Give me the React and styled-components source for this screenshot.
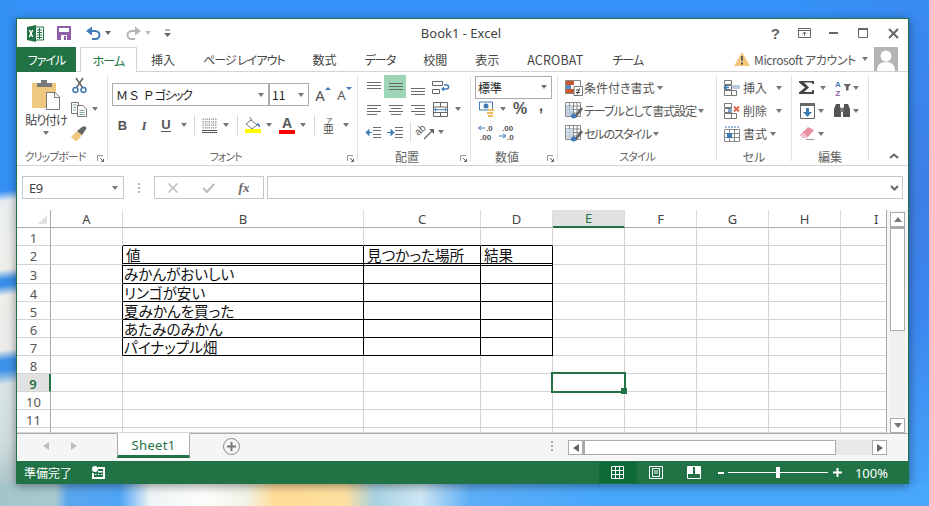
import React from "react";
import styled, { createGlobalStyle } from "styled-components";

const JP = `"Noto Sans CJK JP", "Noto Sans", sans-serif`;
const LAT = `"Noto Sans", "Noto Sans CJK JP", sans-serif`;
const GREEN = "#217346";

const Global = createGlobalStyle`
  html, body { margin: 0; padding: 0; overflow: hidden; background: #3592f8; }
  * { box-sizing: border-box; }
  svg { display: block; flex: none; overflow: visible; }
`;

const Desktop = styled.div`
  width: 929px;
  height: 506px;
  padding: 18px 0 0 16px;
  background:
    linear-gradient(90deg, #a4c6cb 0, #a9cbd0 55px, #5aa6ee 68px, #4fa5f6 120px, #eef4f6 150px, #fdfdfb 205px, #f1f3e8 245px, #ffdc96 275px, #ffe0a0 345px, #a8d2e2 375px, #cfe7f4 420px, #5eaef7 470px, #48a8fc 600px) 0 484px / 100% 22px no-repeat,
    linear-gradient(173deg, #3590f6 0, #3590f6 190px, #e8eef0 200px, #eeeeea 268px, #3b8fe8 278px, #3b8fe8 284px, #ededea 294px, #ebecea 348px, #3f92ea 358px, #3f92ea 368px, #d8e4e4 382px, #cfdcdc 440px, #9dbcc2 500px) 0 0 / 16px 506px no-repeat,
    linear-gradient(135deg, #3592f8 0, #3592f8 55%, #3d7fe6 78%, #3c86ee 86%, #47a7fb 100%);
`;

const Win = styled.div`
  width: 893px;
  height: 466px;
  display: flex;
  flex-direction: column;
  background: #fff;
  border: 1px solid ${GREEN};
  border-bottom: 0;
  box-shadow: 0 2px 9px rgba(0, 0, 0, 0.42);
  font-family: ${JP};
  font-feature-settings: "palt";
  color: #444;
`;

const Slot = styled.div`
  width: ${(p) => p.$w}px;
  margin-left: ${(p) => p.$ml || 0}px;
  height: 100%;
  flex: none;
  display: flex;
  align-items: center;
  justify-content: center;
`;

const TriangleDown = styled.span`
  display: block;
  width: 0;
  height: 0;
  border-left: 3.5px solid transparent;
  border-right: 3.5px solid transparent;
  border-top: 4px solid ${(p) => p.$c || "#777"};
`;
const Caret = ({ w = 10, ml, c }) => (
  <Slot $w={w} $ml={ml}>
    <TriangleDown $c={c} />
  </Slot>
);

/* ---------- title bar ---------- */
const TitleBar = styled.div`
  height: 28px;
  flex: none;
  display: grid;
  grid-template-columns: 1fr auto 1fr;
  align-items: center;
`;
const Quick = styled.div`
  height: 100%;
  display: flex;
  padding: 0 0 0 10px;
`;
const Title = styled.div`
  font: 13px ${LAT};
  color: #444;
  margin-left: -3px;
`;
const WinControls = styled.div`
  height: 100%;
  display: flex;
  justify-content: flex-end;
`;

/* ---------- tabs ---------- */
const TabRow = styled.div`
  height: 25px;
  flex: none;
  display: flex;
  align-items: stretch;
  border-bottom: 1px solid #d4d4d4;
`;
const FileTab = styled.div`
  width: 59px;
  margin-right: 4px;
  height: 25px;
  background: ${GREEN};
  color: #fff;
  font-size: 12px;
  letter-spacing: -1px;
  display: flex;
  align-items: center;
  justify-content: center;
`;
const HomeTab = styled.div`
  width: 57px;
  height: 25px;
  background: #fff;
  color: ${GREEN};
  border: 1px solid #d4d4d4;
  border-bottom: 0;
  font-size: 12px;
  letter-spacing: -1px;
  display: flex;
  align-items: center;
  justify-content: center;
`;
const Tab = styled.div`
  padding: 0 14px;
  margin-left: ${(p) => p.$ml || 0}px;
  font-size: ${(p) => (p.$latin ? 12.5 : 12)}px;
  color: #444;
  display: flex;
  align-items: center;
  white-space: pre;
  letter-spacing: ${(p) => (p.$tight ? "-1px" : p.$latin ? "0.15px" : "0")};
`;
const Account = styled.div`
  margin-left: auto;
  display: flex;
  align-items: center;
  padding-right: 10px;
  height: 24px;
`;
const AccountName = styled.span`
  font-size: 12px;
  color: #555;
  margin-left: 4px;
  letter-spacing: -0.4px;
  white-space: nowrap;
`;
const Avatar = styled.div`
  width: 24px;
  height: 24px;
  background: #b4b4b4;
  overflow: hidden;
`;

/* ---------- ribbon ---------- */
const Ribbon = styled.div`
  height: 94px;
  flex: none;
  display: flex;
  padding-top: 4px;
  border-bottom: 1px solid #d4d4d4;
`;
const Group = styled.div`
  width: ${(p) => p.$w}px;
  height: 85px;
  flex: none;
  display: flex;
  flex-direction: column;
  border-right: 1px solid #e1e1e1;
`;
const GroupBody = styled.div`
  height: 70px;
  flex: none;
  padding-left: ${(p) => p.$pl || 0}px;
  padding-top: ${(p) => p.$pt || 0}px;
  display: flex;
  flex-direction: ${(p) => (p.$row ? "row" : "column")};
`;
const Foot = styled.div`
  height: 15px;
  padding-top: 3px;
  display: grid;
  grid-template-columns: ${(p) => (p.$launch ? "1fr 14px" : "1fr")};
`;
const FootLabel = styled.div`
  text-align: center;
  font-size: ${(p) => (p.$kana ? 11 : 12)}px;
  letter-spacing: ${(p) => (p.$kana ? "-1px" : "0")};
  line-height: 15px;
  color: #666;
  white-space: nowrap;
`;
const FootLaunch = styled.div`
  display: flex;
  align-items: center;
  justify-content: center;
  height: 15px;
  padding-top: 3px;
`;
const Row = styled.div`
  height: ${(p) => p.$h}px;
  margin-top: ${(p) => p.$mt || 0}px;
  flex: none;
  display: flex;
  align-items: center;
`;
const Sep = styled.span`
  display: block;
  width: 1px;
  height: ${(p) => p.$h || 20}px;
  background: #d9d9d9;
`;
const PasteCol = styled.div`
  width: 48px;
  margin-left: 5px;
  padding-top: 4px;
  display: flex;
  flex-direction: column;
  align-items: center;
`;
const PasteLabel = styled.div`
  font-size: 12px;
  line-height: 16px;
  letter-spacing: -1px;
  margin: 2px -4px 3px;
  white-space: nowrap;
`;
const ToolCol = styled.div`
  display: flex;
  flex-direction: column;
`;
const FontBox = styled.div`
  width: ${(p) => p.$w}px;
  height: 23px;
  border: 1px solid #ababab;
  margin-right: ${(p) => p.$mr || 0}px;
  background: #fff;
  display: flex;
  align-items: center;
  justify-content: space-between;
  padding: 0 ${(p) => p.$pr ?? 4}px 0 ${(p) => p.$pl ?? 3}px;
  font-size: 12px;
  color: #222;
  font-feature-settings: normal;
  white-space: pre;
`;
const Kana = styled.span`
  font-feature-settings: "palt";
  letter-spacing: -1.5px;
`;
const GrowA = styled.span`
  position: relative;
  display: block;
  font: ${(p) => p.$s}px ${LAT};
  line-height: 16px;
  color: #555;
  &::after {
    content: "";
    position: absolute;
    right: -6px;
    top: 0;
    border-left: 3px solid transparent;
    border-right: 3px solid transparent;
    ${(p) => (p.$up ? "border-bottom: 3px solid #3f7ab6;" : "border-top: 3px solid #3f7ab6;")}
  }
`;
const Styled1 = styled.span`
  font: ${(p) => (p.$i ? "italic" : "normal")} bold 13px "Liberation Serif", serif;
  font-family: ${(p) => (p.$i ? `"Liberation Serif", serif` : `"Liberation Sans", sans-serif`)};
  color: #555;
  border-bottom: ${(p) => (p.$u ? "1.5px solid #555" : "0")};
  line-height: 13px;
`;
const ColorA = styled.div`
  display: flex;
  flex-direction: column;
  align-items: center;
  font: bold 14px "Liberation Sans", sans-serif;
  line-height: 14px;
  color: #555;
  &::after {
    content: "";
    width: 16px;
    height: 4px;
    background: #ff0000;
    margin-top: 0;
  }
`;
const NumSym = styled.span`
  font: ${(p) => p.$s}px "Liberation Sans", sans-serif;
  font-weight: 600;
  color: #555;
  margin-top: ${(p) => p.$mt || 0}px;
`;
const HiSlot = styled.div`
  width: 22px;
  height: 23px;
  margin-top: -1px;
  background: #9fd5b7;
  flex: none;
  display: flex;
  align-items: center;
  justify-content: center;
`;
const Item = styled.div`
  display: flex;
  align-items: center;
  gap: ${(p) => p.$gap ?? 1}px;
  font-size: 12px;
  color: #555;
  white-space: nowrap;
`;
const ItemText = styled.span`
  letter-spacing: ${(p) => p.$ls || 0}px;
`;
const CollapseArea = styled.div`
  flex: 1;
  height: 85px;
  display: flex;
  align-items: flex-end;
  justify-content: flex-end;
  padding: 0 9px 2px 0;
`;

/* ---------- formula bar ---------- */
const FormulaRow = styled.div`
  height: 44px;
  flex: none;
  display: flex;
  padding: 10px 5px 11px 5px;
`;
const NameBox = styled.div`
  width: 102px;
  border: 1px solid #c6c6c6;
  display: flex;
  align-items: center;
  justify-content: space-between;
  padding: 0 5px 0 6px;
  font: 13px ${LAT};
  letter-spacing: -0.5px;
  color: #444;
`;
const FxDots = styled.div`
  width: 30px;
  display: flex;
  flex-direction: column;
  align-items: center;
  justify-content: center;
  gap: 2px;
  & > i {
    display: block;
    width: 2px;
    height: 2px;
    background: #b5b5b5;
  }
`;
const FxBox = styled.div`
  width: 110px;
  border: 1px solid #c6c6c6;
  display: flex;
  align-items: center;
`;
const FxText = styled.span`
  font: italic bold 13px "Liberation Serif", serif;
  color: #666;
`;
const FormulaInput = styled.div`
  flex: 1;
  margin-left: 3px;
  border: 1px solid #c6c6c6;
  display: flex;
  align-items: center;
  justify-content: flex-end;
  padding-right: 3px;
`;

/* ---------- sheet ---------- */
const SheetArea = styled.div`
  height: 223px;
  flex: none;
  display: flex;
`;
const Sheet = styled.div`
  width: 870px;
  height: 223px;
  display: grid;
  grid-template-columns: 34px 72px 241px 117px repeat(5, 72px) 46px;
  grid-template-rows: 18px 18px 19px 19px repeat(8, 18px) 5px;
  overflow: hidden;
  border-right: 1px solid #ababab;
`;
const Corner = styled.div`
  border-right: 1px solid #ababab;
  border-bottom: 1px solid #ababab;
  display: flex;
  align-items: flex-end;
  justify-content: flex-end;
  padding: 0 3px 3px 0;
  &::after {
    content: "";
    border-left: 9px solid transparent;
    border-bottom: 9px solid #dfdfdf;
  }
`;
const ColHead = styled.div`
  border-right: ${(p) => (p.$clip ? "0" : "1px solid #dcdcdc")};
  border-bottom: ${(p) => (p.$on ? `2px solid ${GREEN}` : "1px solid #ababab")};
  background: ${(p) => (p.$on ? "#e1e1e1" : "#fff")};
  color: ${(p) => (p.$on ? GREEN : "#444")};
  font: 13px ${LAT};
  display: flex;
  align-items: center;
  justify-content: ${(p) => (p.$clip ? "flex-start" : "center")};
  padding-left: ${(p) => (p.$clip ? 33 : 0)}px;
  line-height: 16px;
`;
const RowHead = styled.div`
  border-right: ${(p) => (p.$on ? `2px solid ${GREEN}` : "1px solid #ababab")};
  border-bottom: 1px solid #d4d4d4;
  background: ${(p) => (p.$on ? "#e1e1e1" : "#fff")};
  color: ${(p) => (p.$on ? GREEN : "#555")};
  font: ${(p) => (p.$on ? 600 : 400)} 13px ${LAT};
  line-height: 16px;
  padding-top: 2px;
  display: flex;
  align-items: center;
  justify-content: center;
  overflow: hidden;
`;
const Cell = styled.div`
  position: relative;
  border-right: 1px solid ${(p) => (p.$rb ? "#000" : "#d4d4d4")};
  border-bottom: ${(p) => (p.$dbl ? "3px double #000" : `1px solid ${p.$bb ? "#000" : "#d4d4d4"}`)};
  margin-bottom: ${(p) => (p.$dbl ? "-1px" : 0)};
  z-index: ${(p) => (p.$dbl ? 1 : "auto")};
  background: ${(p) => (p.$dbl ? "#fff" : "transparent")};
  font-size: 14.6px;
  line-height: 17px;
  color: #111;
  padding-left: ${(p) => p.$pl ?? 1}px;
  padding-bottom: ${(p) => p.$pb || 0}px;
  white-space: nowrap;
  display: flex;
  align-items: flex-end;
  min-width: 0;
`;
const CellCursor = styled.div`
  position: absolute;
  z-index: 3;
  left: -2px;
  top: -2px;
  width: 75px;
  height: 21px;
  border: 2px solid ${GREEN};
  &::after {
    content: "";
    position: absolute;
    right: -3px;
    bottom: -3px;
    width: 6px;
    height: 6px;
    background: ${GREEN};
  }
`;
const VScroll = styled.div`
  width: 21px;
  height: 223px;
  padding: 2px 3px 0 3px;
  background: #f5f5f5;
  display: flex;
  flex-direction: column;
`;
const ScrollBtn = styled.div`
  width: 15px;
  height: 15px;
  flex: none;
  background: #fff;
  border: 1px solid #ababab;
  display: flex;
  align-items: center;
  justify-content: center;
`;
const VThumb = styled.div`
  height: 104px;
  flex: none;
  background: #fff;
  border: 1px solid #ababab;
  border-top: 2px solid #ababab;
`;
const VTrack = styled.div`
  flex: 1;
  background: #f0f0f0;
`;

/* ---------- sheet tabs ---------- */
const TabBar = styled.div`
  height: 28px;
  flex: none;
  background: #f5f5f5;
  border-top: 1px solid #ababab;
  display: flex;
`;
const SheetNav = styled.div`
  width: 100px;
  height: 24px;
  display: flex;
  padding-left: 21px;
`;
const SheetTab = styled.div`
  width: 73px;
  height: 25px;
  margin-top: -1px;
  background: #fff;
  border: 1px solid #ababab;
  border-top: 1px solid #fff;
  border-bottom: 3px solid ${GREEN};
  color: ${GREEN};
  font: 13px ${LAT};
  letter-spacing: 0.3px;
  display: flex;
  align-items: center;
  justify-content: center;
`;
const AddSheet = styled.div`
  width: 17px;
  height: 17px;
  margin: 4px 0 0 33px;
  border: 1.5px solid #888;
  border-radius: 50%;
  display: flex;
  align-items: center;
  justify-content: center;
`;
const TabSpacer = styled.div`
  flex: 1;
`;
const TabDots = styled(FxDots)`
  width: 16px;
  height: 24px;
  & > i { background: #aaa; }
`;
const HScroll = styled.div`
  width: 319px;
  height: 15px;
  margin: 6px 21px 0 8px;
  display: flex;
`;
const HThumb = styled.div`
  width: 253px;
  background: #fff;
  border: 1px solid #ababab;
  border-left: 2px solid #ababab;
`;
const HTrack = styled.div`
  flex: 1;
  background: #e8e8e8;
`;

/* ---------- status ---------- */
const Status = styled.div`
  height: 23px;
  flex: none;
  background: ${GREEN};
  color: #fff;
  display: flex;
  align-items: center;
  padding-left: 7px;
`;
const StatusText = styled.span`
  font-size: 12px;
  width: 68px;
  white-space: nowrap;
`;
const ViewBtn = styled.div`
  width: 38px;
  height: 21px;
  background: ${(p) => (p.$on ? "#0e6b39" : "transparent")};
  display: flex;
  align-items: center;
  justify-content: center;
`;
const ZoomTrack = styled.div`
  width: 100px;
  height: 1px;
  background: #fff;
  position: relative;
  margin: 0 3px 0 2px;
  &::after {
    content: "";
    position: absolute;
    left: 48px;
    top: -5px;
    width: 4px;
    height: 11px;
    background: #fff;
  }
`;
const ZoomPct = styled.span`
  font: 13px ${LAT};
  margin-left: 13px;
`;

/* ---------- icons ---------- */
const B = "#3f7ab6";
const Ico = ({ w, h = w, children }) => (
  <svg width={w} height={h} viewBox={`0 0 ${w} ${h}`} fill="none">
    {children}
  </svg>
);

const XlLogo = () => (
  <Ico w={17} h={17}>
    <path d="M7 2h9.5v13H7z" fill="#fff" stroke="#217346" />
    <path d="M10 5h5M10 7.5h5M10 10h5M10 12.5h5M12.5 3v11" stroke="#217346" strokeWidth="1" />
    <path d="M0 2l9-2v17L0 15z" fill="#217346" />
    <path d="M2.3 5l3.4 7M5.7 5l-3.4 7" stroke="#fff" strokeWidth="1.5" />
  </Ico>
);
const SaveIco = () => (
  <Ico w={14} h={14}>
    <path d="M0 0h14v14H0z" fill="#8e5ea8" />
    <path d="M2 2h10v4H2z" fill="#fff" />
    <path d="M4 9h6v5H4z" fill="#fff" />
    <path d="M7 10h2v4H7z" fill="#8e5ea8" />
  </Ico>
);
const UndoIco = ({ c = "#3f7ab6", flip }) => (
  <Ico w={15} h={14}>
    <g transform={flip ? "translate(15 0) scale(-1 1)" : undefined}>
      <path d="M2.5 5h6.5c3 0 4.5 2 4.5 4s-1.500 4-4 4H6" stroke={c} strokeWidth="2" />
      <path d="M6 0.500v9L0 5z" fill={c} />
    </g>
  </Ico>
);
const CustomizeIco = () => (
  <Ico w={7} h={8}>
    <path d="M1 1h5" stroke="#666" />
    <path d="M0 4h7L3.500 8z" fill="#666" />
  </Ico>
);
const HelpText = styled.span`
  font: bold 15px "Liberation Sans", sans-serif;
  color: #666;
`;
const DisplayIco = () => (
  <Ico w={13} h={10}>
    <path d="M.5.500h12v9H.5zM.5 2.500h12" stroke="#666" />
    <path d="M6.500 8V4M4.500 6l2-2 2 2" stroke="#666" />
  </Ico>
);
const MinIco = () => (
  <Ico w={10} h={3}>
    <path d="M0 0h9v2H0z" fill="#666" />
  </Ico>
);
const MaxIco = () => (
  <Ico w={11} h={10}>
    <path d="M.5 1.500h9v8h-9z" stroke="#666" />
    <path d="M0 0h10v2H0z" fill="#666" />
  </Ico>
);
const CloseIco = () => (
  <Ico w={11} h={11}>
    <path d="M1 1l9 9M10 1l-9 9" stroke="#666" strokeWidth="2" />
  </Ico>
);
const WarnIco = () => (
  <Ico w={16} h={14}>
    <path d="M8 0l8 14H0z" fill="#f3c67e" />
    <path d="M7 4h2l-.3 5H7.300zM7 10.500h2v2H7z" fill="#555" />
  </Ico>
);
const AvatarIco = () => (
  <Ico w={24} h={24}>
    <circle cx="12" cy="9" r="5.500" fill="#fff" />
    <path d="M3 24c0-6 3-9 9-9s9 3 9 9z" fill="#fff" />
  </Ico>
);
const PasteIco = () => (
  <Ico w={28} h={30}>
    <path d="M0 3h24v25H0z" fill="#edc87e" />
    <path d="M5 3h4V0h6v3h5v4H5z" fill="#7a7a7a" />
    <path d="M14.500 12.500H23l4.500 4.500v12.500h-13z" fill="#fff" stroke="#777" />
    <path d="M22.500 13v4.500H27" stroke="#777" />
  </Ico>
);
const CutIco = () => (
  <Ico w={15} h={16}>
    <path d="M4.500 9.500L11 0M10.500 9.500L4 0" stroke="#666" strokeWidth="1.500" />
    <circle cx="3.500" cy="12" r="2.500" stroke={B} strokeWidth="1.500" />
    <circle cx="11.500" cy="12" r="2.500" stroke={B} strokeWidth="1.500" />
  </Ico>
);
const CopyIco = () => (
  <Ico w={16} h={15}>
    <path d="M.5.500h7v11h-7z" fill="#fff" stroke="#777" />
    <path d="M6.500 3.500H12l3.500 3.500v7.500h-9z" fill="#fff" stroke="#777" />
    <path d="M2 3h4M2 5.500h3M2 8h3M8.500 8.500h5M8.500 10.500h5M8.500 12.500h5" stroke="#8aa" />
  </Ico>
);
const BrushIco = () => (
  <Ico w={16} h={15}>
    <path d="M0 11l6-6 5 4-5 6-3-1z" fill="#edc87e" />
    <path d="M6 5l5-4 3-1 1.500 2-1 2-3.500 5z" fill="#666" />
  </Ico>
);
const BorderIco = () => (
  <Ico w={15} h={15}>
    <path d="M1 1h13M1 4h13M1 7h13M1 10h13M1 1v9M4 1v9M7 1v9M11 1v9M14 1v9" stroke="#8a8a8a" strokeDasharray="1 1" />
    <path d="M0 12.500h15" stroke="#555" />
    <path d="M0 14.500h15" stroke="#555" />
  </Ico>
);
const FillIco = () => (
  <Ico w={16} h={16}>
    <path d="M1 7l5-4 6 5-5 4z" fill="#fff" stroke="#777" />
    <path d="M5 0l2 4" stroke="#777" />
    <path d="M12 6c2 0 3 2 3 4-2 0-3-2-3-4z" fill={B} />
    <path d="M0 12h16v4H0z" fill="#ffff00" />
  </Ico>
);
const PhoneticIco = () => (
  <Ico w={13} h={16}>
    <text x="3" y="6" fontSize="7" fill="#555" fontFamily={JP}>ア</text>
    <text x="0" y="16" fontSize="11" fill="#555" fontFamily={JP}>亜</text>
  </Ico>
);
const Launch = () => (
  <Ico w={7} h={7}>
    <path d="M.5 6V.5H6" stroke="#999" />
    <path d="M3 3l3.500 3.500M6.500 4v2.500H4" stroke="#666" />
  </Ico>
);
const Lines = ({ ys, ws }) => (
  <Ico w={15} h={15}>
    {ys.map((y, i) => (
      <path key={i} d={`M${ws[i][0]} ${y}.5H${ws[i][1]}`} stroke="#6a6a6a" />
    ))}
  </Ico>
);
const full = [[1, 15], [1, 15], [1, 15]];
const WrapIco = () => (
  <Ico w={17} h={15}>
    <path d="M.5 1.500h10v4H.5zM.5 9.500h7v4H.5z" stroke="#666" />
    <path d="M12 5h3c2 0 2 4 0 4h-4" stroke={B} strokeWidth="1.500" />
    <path d="M12 6.500v5L9 9z" fill={B} />
  </Ico>
);
const MergeIco = () => (
  <Ico w={15} h={15}>
    <path d="M.5.500h14v14H.5zM.5 5h14M.5 10.500h14M7.500.500V5M7.500 10.500v4" stroke="#666" />
    <path d="M3 7.700h9" stroke={B} />
    <path d="M3 5.700v4L1 7.700zM12 5.700v4l2-2z" fill={B} />
  </Ico>
);
const IndentIco = ({ rev }) => (
  <Ico w={16} h={13}>
    <path d="M8 1.500h8M8 4.500h8M8 8.500h8M8 11.500h8" stroke="#6a6a6a" />
    {rev ? (
      <path d="M0 6.500h4M4 3.500v6l3-3z" stroke={B} fill={B} />
    ) : (
      <path d="M2 6.500h5M4 3.500v6l-3-3z" stroke={B} fill={B} />
    )}
  </Ico>
);
const OrientIco = () => (
  <Ico w={17} h={16}>
    <text x="0" y="0" fontSize="10" fill="#555" fontFamily="Liberation Sans" transform="translate(1 12) rotate(-40)">ab</text>
    <path d="M7 15L16 6" stroke="#666" strokeWidth="1.200" />
    <path d="M12 5h5v5z" fill="#666" />
  </Ico>
);
const CurrencyIco = () => (
  <Ico w={17} h={16}>
    <path d="M.5 1h13v8H.5z" fill="#fff" stroke={B} />
    <circle cx="7" cy="5" r="2.500" fill={B} />
    <path d="M9 8h6v2H9zM8 11h6v2H8zM9 14h5v2H9z" fill="#edb95c" />
  </Ico>
);
const DecIco = ({ more }) => (
  <Ico w={16} h={16}>
    {more ? (
      <>
        <text x="3" y="6.500" fontSize="8" fill="#555" fontFamily="Liberation Sans" fontWeight="700">.00</text>
        <text x="8" y="15.500" fontSize="8" fill="#555" fontFamily="Liberation Sans" fontWeight="700">.0</text>
        <path d="M0 12h6M4 10l3 2-3 2" stroke={B} />
      </>
    ) : (
      <>
        <text x="8" y="6.500" fontSize="8" fill="#555" fontFamily="Liberation Sans" fontWeight="700">.0</text>
        <text x="2" y="15.500" fontSize="8" fill="#555" fontFamily="Liberation Sans" fontWeight="700">.00</text>
        <path d="M1 4h6M3 2L0.500 4 3 6" stroke={B} />
      </>
    )}
  </Ico>
);
const CondIco = () => (
  <Ico w={18} h={16}>
    <path d="M.5.500h15v13H.5z" fill="#fff" stroke="#888" />
    <path d="M1 1h8v4H1z" fill="#c9562e" />
    <path d="M1 5h5v4H1z" fill="#5b8cc4" />
    <path d="M1 9h8v4H1z" fill="#c9562e" />
    <path d="M9 6.500h8.500v9H9z" fill="#fff" stroke="#777" />
    <path d="M11 10h4M11 12.500h4M14.500 8.500l-2.500 6" stroke="#444" />
  </Ico>
);
const TableIco = ({ light }) => (
  <Ico w={18} h={17}>
    <path d="M.5.500h15v14H.5zM.5 4h15M.5 7.500h15M.5 11h15M4.500.500v14M8.500.500v14M12 .500v14" stroke="#8a8a8a" />
    <path d="M1 4h7v10H1z" fill={light ? "#c9d8e8" : "#b9cbe0"} opacity=".8" />
    <path d="M9 14l7-9 2 2-7 9z" fill="#666" />
    <circle cx="8.500" cy="14" r="2.500" fill={B} />
  </Ico>
);
const CellGrid = ({ children }) => (
  <Ico w={16} h={16}>
    <path d="M.5.500h7v4h-7zM.5 5.500h7v4h-7zM.5 10.500h7v5h-7zM7.500 10.500h5v5h-5z" stroke="#777" fill="#fff" />
    {children}
  </Ico>
);
const InsertIco = () => (
  <CellGrid>
    <path d="M8 5h8v4H8z" fill="#b9cbe0" />
    <path d="M0 7.500h5M3 5L.5 7.500 3 10" stroke={B} strokeWidth="1.500" />
  </CellGrid>
);
const DeleteIco = () => (
  <CellGrid>
    <path d="M4 6h4v3H4z" fill="#7ea6d0" />
    <path d="M10 3.500l5 5M15 3.500l-5 5" stroke="#e0654b" strokeWidth="1.800" />
  </CellGrid>
);
const FormatIco = () => (
  <Ico w={16} h={16}>
    <path d="M1 1h14" stroke={B} strokeDasharray="2 1" />
    <path d="M.5 3.500h15v12H.5zM.5 7.500h15M.5 11.500h15M5.500 3.500v12M10.500 3.500v12" stroke="#888" />
    <path d="M3 7h5v5H3z" fill={B} />
  </Ico>
);
const SigmaIco = () => (
  <Ico w={16} h={13}>
    <path d="M0 0h15v3h-1.500l-1-1.500H5l5 5-5 4.500h7.500l1-2H15v4H0v-1.500L6 6.500 0 1.500z" fill="#444" />
  </Ico>
);
const SortIco = () => (
  <Ico w={16} h={17}>
    <text x="0" y="7.500" fontSize="8" fontWeight="700" fill="#3f7ab6" fontFamily="Liberation Sans">A</text>
    <text x="0.500" y="16.500" fontSize="8" fontWeight="700" fill="#8e5ea8" fontFamily="Liberation Sans">Z</text>
    <path d="M8.500 5h7.500l-2.500 3v3.500h-2.500V8z" fill="#666" />
  </Ico>
);
const FillDownIco = () => (
  <Ico w={15} h={16}>
    <path d="M.5.500h14v15H.5z" fill="#fff" stroke="#666" />
    <path d="M0 0h15v3H0z" fill="#666" />
    <path d="M6 5h3v4h3l-4.500 5L3 9h3z" fill={B} />
  </Ico>
);
const FindIco = () => (
  <Ico w={16} h={15}>
    <path d="M2 1h4v3l1 1v9H0V6zM10 1h4l2 5v8H9V5l1-1z" fill="#555" />
    <path d="M6 5h4v4H6z" fill="#777" />
  </Ico>
);
const EraserIco = () => (
  <Ico w={16} h={13}>
    <path d="M1 8l8-8 6 3-7 8H4z" fill="#e88fa2" />
    <path d="M1 8l3 3h4l1-1-4-4z" fill="#f3c3cd" />
    <path d="M7 12.500h8" stroke="#999" />
  </Ico>
);
const CalcIco = () => (
  <Ico w={13} h={13}>
    <circle cx="3" cy="3" r="3" fill="#fff" />
    <path d="M6 1h7v12H0V7h2v4h9V3H6z" fill="#fff" />
    <path d="M3 8h1.500v1H3zM6 8h1.500v1H6zM9 8h1.500v1H9zM6 5h4.500v1.500H6z" fill="#fff" />
  </Ico>
);
const GridViewIco = () => (
  <Ico w={13} h={13}>
    <path d="M.5.500h12v12H.5zM.5 4.500h12M.5 8.500h12M4.500.500v12M8.500.500v12" stroke="#fff" />
  </Ico>
);
const PageViewIco = () => (
  <Ico w={14} h={13}>
    <path d="M.5.500h13v12H.5z" stroke="#fff" />
    <path d="M3.500 2.500h7v8h-7zM5 5h4M5 7h4" stroke="#fff" />
  </Ico>
);
const BreakViewIco = () => (
  <Ico w={14} h={13}>
    <path d="M.5.500h13v12H.5z" stroke="#fff" />
    <path d="M1 1h5v7H1zM8 1h5v7H8z" fill="#fff" />
  </Ico>
);
const MinusIco = () => (
  <Ico w={6} h={8}>
    <path d="M0 3h6v2H0z" fill="#fff" />
  </Ico>
);
const PlusIco = () => (
  <Ico w={9} h={9}>
    <path d="M0 3.500h9v2H0zM3.500 0h2v9h-2z" fill="#fff" />
  </Ico>
);
const XMark = () => (
  <Ico w={10} h={10}>
    <path d="M.5.500l9 9M9.500.500l-9 9" stroke="#bcbcbc" strokeWidth="1.500" />
  </Ico>
);
const Check = () => (
  <Ico w={13} h={10}>
    <path d="M1 5l4 4 7-8" stroke="#bcbcbc" strokeWidth="2" />
  </Ico>
);
const ChevronDown = () => (
  <Ico w={9} h={6}>
    <path d="M1 1l3.500 3.500L8 1" stroke="#666" strokeWidth="2" />
  </Ico>
);
const ChevronUp = () => (
  <Ico w={10} h={6}>
    <path d="M1 5l4-3.500L9 5" stroke="#666" strokeWidth="2" />
  </Ico>
);
const Arrow = ({ dir, c = "#666" }) => (
  <Ico w={6} h={8}>
    <path d={dir === "l" ? "M6 0v8L0 4z" : "M0 0v8l6-4z"} fill={c} />
  </Ico>
);
const ArrowV = ({ up }) => (
  <Ico w={8} h={5}>
    <path d={up ? "M4 0l4 5H0z" : "M0 0h8L4 5z"} fill="#777" />
  </Ico>
);

/* ---------- data ---------- */
const COLS = ["A", "B", "C", "D", "E", "F", "G", "H", "I"];
const ROWS = [1, 2, 3, 4, 5, 6, 7, 8, 9, 10, 11, 12];
const VALUES = {
  2: ["値", "見つかった場所", "結果"],
  3: ["みかんがおいしい"],
  4: ["リンゴが安い"],
  5: ["夏みかんを買った"],
  6: ["あたみのみかん"],
  7: ["パイナップル畑"],
};

const cellProps = (r, ci) => {
  const inCol = ci >= 1 && ci <= 3;
  const inRow = r >= 2 && r <= 7;
  return {
    $rb: inRow && ci >= 0 && ci <= 3,
    $bb: inCol && r >= 1 && r <= 7,
    $dbl: inCol && r === 2,
    $pl: r === 2 ? 3 : 1,
    $pb: r === 3 ? 1 : 0,
  };
};

const Grid = () => (
  <Sheet>
    <Corner />
    {COLS.map((c) => (
      <ColHead key={c} $on={c === "E"} $clip={c === "I"}>{c}</ColHead>
    ))}
    {ROWS.map((r) => (
      <React.Fragment key={r}>
        <RowHead $on={r === 9}>{r < 12 ? r : ""}</RowHead>
        {COLS.map((c, ci) => (
          <Cell key={c} {...cellProps(r, ci)}>
            {VALUES[r] && ci >= 1 ? VALUES[r][ci - 1] : ""}
            {r === 9 && c === "E" && <CellCursor />}
          </Cell>
        ))}
      </React.Fragment>
    ))}
  </Sheet>
);

const top3 = { ys: [2, 5, 8], ws: full };
const mid3 = { ys: [4, 7, 10], ws: full };
const bot3 = { ys: [8, 11, 14], ws: full };

export default function App() {
  return (
    <Desktop>
      <Global />
      <Win>
        <TitleBar>
          <Quick>
            <Slot $w={17}><XlLogo /></Slot>
            <Slot $w={39}><SaveIco /></Slot>
            <Slot $w={20}><UndoIco /></Slot>
            <Caret w={10} c="#666" />
            <Slot $w={20} $ml={10}><UndoIco c="#b5b5b5" flip /></Slot>
            <Caret w={10} c="#bbb" />
            <Slot $w={10} $ml={9}><CustomizeIco /></Slot>
          </Quick>
          <Title>Book1 - Excel</Title>
          <WinControls>
            <Slot $w={29.5}><HelpText>?</HelpText></Slot>
            <Slot $w={29.5}><DisplayIco /></Slot>
            <Slot $w={29.5}><MinIco /></Slot>
            <Slot $w={29.5}><MaxIco /></Slot>
            <Slot $w={29.5}><CloseIco /></Slot>
          </WinControls>
        </TitleBar>

        <TabRow>
          <FileTab>ファイル</FileTab>
          <HomeTab>ホーム</HomeTab>
          <Tab>挿入</Tab>
          <Tab $tight>ページ レイアウト</Tab>
          <Tab>数式</Tab>
          <Tab $tight>データ</Tab>
          <Tab>校閲</Tab>
          <Tab>表示</Tab>
          <Tab $latin>ACROBAT</Tab>
          <Tab $tight $ml={1}>チーム</Tab>
          <Account>
            <WarnIco />
            <AccountName>Microsoft アカウント</AccountName>
            <Caret w={18} />
            <Avatar><AvatarIco /></Avatar>
          </Account>
        </TabRow>

        <Ribbon>
          <Group $w={91}>
            <GroupBody $row>
              <PasteCol>
                <PasteIco />
                <PasteLabel>貼り付け</PasteLabel>
                <TriangleDown />
              </PasteCol>
              <ToolCol>
                <Row $h={20}><Slot $w={18}><CutIco /></Slot></Row>
                <Row $h={26}><Slot $w={18}><CopyIco /></Slot><Caret w={14} /></Row>
                <Row $h={22}><Slot $w={18}><BrushIco /></Slot></Row>
              </ToolCol>
            </GroupBody>
            <Foot $launch>
              <FootLabel $kana>クリップボード</FootLabel>
              <FootLaunch><Launch /></FootLaunch>
            </Foot>
          </Group>

          <Group $w={250}>
            <GroupBody $pl={4} $pt={7}>
              <Row $h={23}>
                <FontBox $w={157}>
                  <span>ＭＳ Ｐ<Kana>ゴシック</Kana></span>
                  <TriangleDown />
                </FontBox>
                <FontBox $w={40} $pl={2}>
                  <span>11</span>
                  <TriangleDown />
                </FontBox>
                <Slot $w={22}><GrowA $s={15} $up>A</GrowA></Slot>
                <Slot $w={21}><GrowA $s={13}>A</GrowA></Slot>
              </Row>
              <Row $h={20} $mt={9}>
                <Slot $w={21}><Styled1>B</Styled1></Slot>
                <Slot $w={22}><Styled1 $i>I</Styled1></Slot>
                <Slot $w={22}><Styled1 $u>U</Styled1></Slot>
                <Caret w={13} />
                <Slot $w={8}><Sep /></Slot>
                <Slot $w={22}><BorderIco /></Slot>
                <Caret w={12} />
                <Slot $w={10}><Sep /></Slot>
                <Slot $w={22}><FillIco /></Slot>
                <Caret w={10} />
                <Slot $w={26}><ColorA>A</ColorA></Slot>
                <Caret w={6} />
                <Slot $w={16}><Sep /></Slot>
                <Slot $w={14}><PhoneticIco /></Slot>
                <Caret w={20} />
              </Row>
            </GroupBody>
            <Foot $launch>
              <FootLabel $kana>フォント</FootLabel>
              <FootLaunch><Launch /></FootLaunch>
            </Foot>
          </Group>

          <Group $w={113}>
            <GroupBody $pl={4}>
              <Row $h={22}>
                <Slot $w={22}><Lines {...top3} /></Slot>
                <HiSlot><Lines {...mid3} /></HiSlot>
                <Slot $w={22}><Lines {...bot3} /></Slot>
                <Slot $w={24}><WrapIco /></Slot>
              </Row>
              <Row $h={22}>
                <Slot $w={22}><Lines ys={[3, 6, 9, 12]} ws={[[1, 15], [1, 11], [1, 15], [1, 11]]} /></Slot>
                <Slot $w={22}><Lines ys={[3, 6, 9, 12]} ws={[[1, 15], [3, 13], [1, 15], [3, 13]]} /></Slot>
                <Slot $w={22}><Lines ys={[3, 6, 9, 12]} ws={[[1, 15], [5, 15], [1, 15], [5, 15]]} /></Slot>
                <Slot $w={24}><MergeIco /></Slot>
                <Caret w={12} />
              </Row>
              <Row $h={24}>
                <Slot $w={22}><IndentIco /></Slot>
                <Slot $w={22}><IndentIco rev /></Slot>
                <Slot $w={8}><Sep /></Slot>
                <Slot $w={22}><OrientIco /></Slot>
                <Caret w={10} />
              </Row>
            </GroupBody>
            <Foot $launch>
              <FootLabel>配置</FootLabel>
              <FootLaunch><Launch /></FootLaunch>
            </Foot>
          </Group>

          <Group $w={87}>
            <GroupBody $pl={4}>
              <Row $h={22}>
                <FontBox $w={77} $pl={2}>
                  <span>標準</span>
                  <TriangleDown />
                </FontBox>
              </Row>
              <Row $h={22}>
                <Slot $w={24}><CurrencyIco /></Slot>
                <Caret w={8} />
                <Slot $w={26}><NumSym $s={16}>%</NumSym></Slot>
                <Slot $w={16}><NumSym $s={16} $mt={-6}>,</NumSym></Slot>
              </Row>
              <Row $h={24}>
                <Slot $w={22}><DecIco /></Slot>
                <Slot $w={20}><DecIco more /></Slot>
              </Row>
            </GroupBody>
            <Foot $launch>
              <FootLabel>数値</FootLabel>
              <FootLaunch><Launch /></FootLaunch>
            </Foot>
          </Group>

          <Group $w={159}>
            <GroupBody $pl={7}>
              <Row $h={23}>
                <Item><CondIco /><ItemText>条件付き書式</ItemText></Item>
                <Caret w={10} />
              </Row>
              <Row $h={23}>
                <Item><TableIco /><ItemText $ls={-1}>テーブルとして書式設定</ItemText></Item>
                <Caret w={10} />
              </Row>
              <Row $h={23}>
                <Item><TableIco light /><ItemText $ls={-1.5}>セルのスタイル</ItemText></Item>
                <Caret w={10} />
              </Row>
            </GroupBody>
            <Foot><FootLabel $kana>スタイル</FootLabel></Foot>
          </Group>

          <Group $w={75}>
            <GroupBody $pl={7}>
              <Row $h={23}>
                <Item $gap={3}><InsertIco />挿入</Item>
                <Caret w={10} ml={7} />
              </Row>
              <Row $h={23}>
                <Item $gap={3}><DeleteIco />削除</Item>
                <Caret w={10} ml={7} />
              </Row>
              <Row $h={23}>
                <Item $gap={3}><FormatIco />書式</Item>
                <Caret w={10} ml={1} />
              </Row>
            </GroupBody>
            <Foot><FootLabel>セル</FootLabel></Foot>
          </Group>

          <Group $w={77}>
            <GroupBody $pl={7}>
              <Row $h={23}>
                <Slot $w={16}><SigmaIco /></Slot>
                <Caret w={16} />
                <Slot $w={16} $ml={4}><SortIco /></Slot>
                <Caret w={10} />
              </Row>
              <Row $h={23}>
                <Slot $w={16}><FillDownIco /></Slot>
                <Caret w={12} />
                <Slot $w={16} $ml={7}><FindIco /></Slot>
                <Caret w={12} />
              </Row>
              <Row $h={23}>
                <Slot $w={16}><EraserIco /></Slot>
                <Caret w={12} />
              </Row>
            </GroupBody>
            <Foot><FootLabel>編集</FootLabel></Foot>
          </Group>

          <CollapseArea><ChevronUp /></CollapseArea>
        </Ribbon>

        <FormulaRow>
          <NameBox>E9<TriangleDown /></NameBox>
          <FxDots><i /><i /><i /></FxDots>
          <FxBox>
            <Slot $w={36}><XMark /></Slot>
            <Slot $w={34}><Check /></Slot>
            <Slot $w={38}><FxText>fx</FxText></Slot>
          </FxBox>
          <FormulaInput><ChevronDown /></FormulaInput>
        </FormulaRow>

        <SheetArea>
          <Grid />
          <VScroll>
            <ScrollBtn><ArrowV up /></ScrollBtn>
            <VThumb />
            <VTrack />
            <ScrollBtn><ArrowV /></ScrollBtn>
          </VScroll>
        </SheetArea>

        <TabBar>
          <SheetNav>
            <Slot $w={16}><Arrow dir="l" c="#bbb" /></Slot>
            <Slot $w={13} $ml={13}><Arrow dir="r" c="#bbb" /></Slot>
          </SheetNav>
          <SheetTab>Sheet1</SheetTab>
          <AddSheet><Ico w={9} h={9}><path d="M3.500 0h2v9h-2zM0 3.500h9v2H0z" fill="#777" /></Ico></AddSheet>
          <TabSpacer />
          <TabDots><i /><i /><i /></TabDots>
          <HScroll>
            <ScrollBtn><Arrow dir="l" /></ScrollBtn>
            <HThumb />
            <HTrack />
            <ScrollBtn><Arrow dir="r" /></ScrollBtn>
          </HScroll>
        </TabBar>

        <Status>
          <StatusText>準備完了</StatusText>
          <CalcIco />
          <TabSpacer />
          <ViewBtn $on><GridViewIco /></ViewBtn>
          <ViewBtn><PageViewIco /></ViewBtn>
          <ViewBtn><BreakViewIco /></ViewBtn>
          <Slot $w={9} $ml={4}><MinusIco /></Slot>
          <ZoomTrack />
          <Slot $w={9} $ml={2}><PlusIco /></Slot>
          <ZoomPct>100%</ZoomPct>
          <Slot $w={20} />
        </Status>
      </Win>
    </Desktop>
  );
}
